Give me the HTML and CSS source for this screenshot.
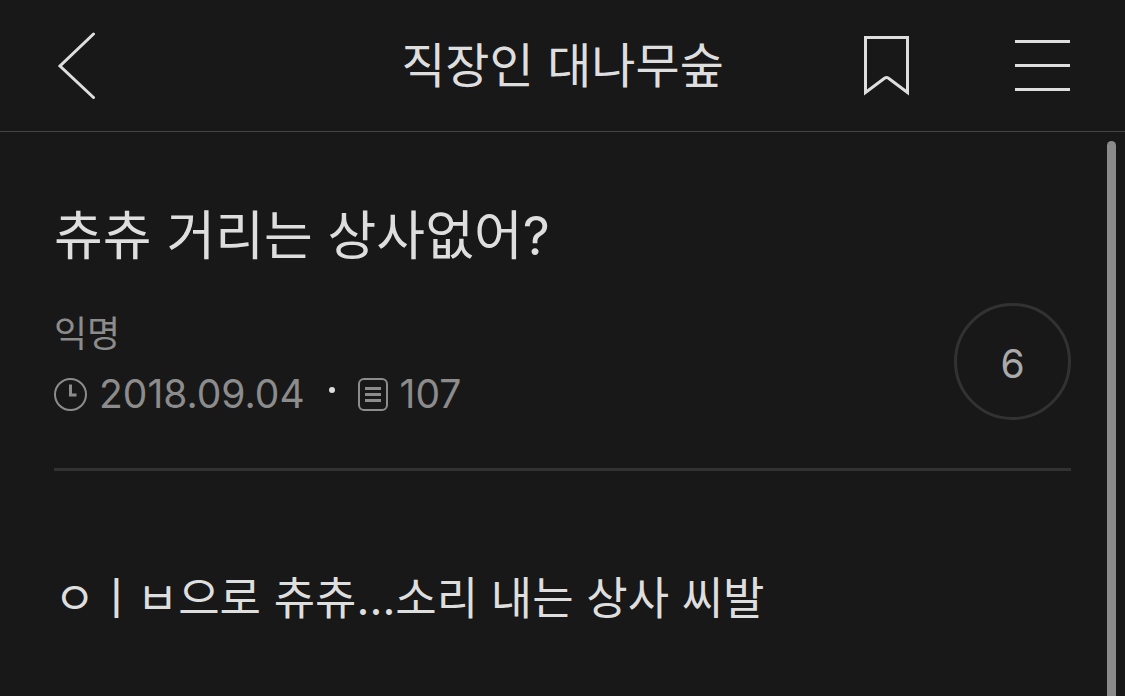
FILE: index.html
```
<!DOCTYPE html>
<html lang="ko">
<head>
    <meta charset="UTF-8">
    <meta name="viewport" content="width=device-width, initial-scale=1.0">
    <title>직장인 대나무숲</title>
    <link rel="stylesheet" href="styles.css">
</head>
<body>
    <header class="topbar">
        <div class="topbar-left">
            <button class="icon-btn" type="button" aria-label="뒤로">
                <svg width="40" height="68" viewBox="0 0 40 68" fill="none" stroke="currentColor" stroke-width="3" stroke-linecap="round">
                    <path d="M38.500 2 L5 34 L38.500 65.500"/>
                </svg>
            </button>
        </div>
        <h1>직장인 대나무숲</h1>
        <div class="topbar-right">
            <button class="icon-btn" type="button" aria-label="북마크">
                <svg width="46" height="62" viewBox="0 0 46 62" fill="none" stroke="currentColor" stroke-width="3">
                    <path d="M1.500 2.500 H43.500 V57.500 L24.200 43 Q22.500 42 20.800 43 L1.500 57.500 Z"/>
                </svg>
            </button>
            <button class="icon-btn" type="button" aria-label="메뉴">
                <svg width="55" height="52" viewBox="0 0 55 52" fill="none" stroke="currentColor" stroke-width="3">
                    <path d="M0 1.500 H55 M0 25.500 H55 M0 49.500 H55"/>
                </svg>
            </button>
        </div>
    </header>
    <main class="post">
        <div class="post-head">
            <h2>츄츄 거리는 상사없어?</h2>
            <div class="post-info">
                <div class="post-meta">
                    <p class="author">익명</p>
                    <p class="stats">
                        <svg width="33" height="33" viewBox="0 0 33 33" fill="none" stroke="currentColor">
                            <circle cx="16.500" cy="16.500" r="15.500" stroke-width="2"/>
                            <path d="M16.500 6.500 V17 H22.500" stroke-width="3"/>
                        </svg>
                        <span class="date">2018.09.04</span>
                        <span class="dot"></span>
                        <svg width="30" height="33" viewBox="0 0 30 33" fill="none" stroke="currentColor">
                            <rect x="1" y="1" width="28" height="31" rx="5" stroke-width="2"/>
                            <path d="M7 10.500 H23 M7 16.500 H23 M7 22.500 H23" stroke-width="3"/>
                        </svg>
                        <span class="views">107</span>
                    </p>
                </div>
                <a class="comments" href="#comments">6</a>
            </div>
        </div>
        <p class="post-body">ㅇㅣㅂ으로 츄츄...소리 내는 상사 씨발</p>
    </main>
    <div class="scrollbar"></div>
</body>
</html>
```
FILE: styles.css
```
* {
    box-sizing: border-box;
}
body {
    font-family: Inter, "Noto Sans CJK KR", sans-serif;
    margin: 0;
    background-color: #181818;
    color: #dedede;
    min-height: 100vh;
    overflow: hidden;
}
h1, h2, p {
    margin: 0;
    font-weight: 400;
}
svg {
    display: block;
    flex-shrink: 0;
}
.topbar {
    display: grid;
    grid-template-columns: 1fr auto 1fr;
    align-items: center;
    height: 132px;
    padding: 0 55px;
    border-bottom: 1px solid #444;
}
.topbar h1 {
    font-size: 48px;
    line-height: 64px;
}
.topbar-left {
    display: flex;
}
.topbar-right {
    display: flex;
    align-items: center;
    justify-content: flex-end;
    gap: 105px;
}
.icon-btn {
    padding: 0;
    border: 0;
    background: none;
    color: inherit;
    cursor: pointer;
}
.post {
    padding: 66px 54px;
}
.post-head {
    padding-bottom: 45px;
    border-bottom: 3px solid #323232;
}
.post-head h2 {
    font-size: 53px;
    line-height: 76px;
}
.post-info {
    display: flex;
    align-items: flex-start;
    justify-content: space-between;
    margin-top: 29px;
}
.post-meta {
    color: #8c8c8c;
}
.author {
    font-size: 36px;
    line-height: 62px;
}
.stats {
    display: flex;
    align-items: center;
    font-size: 39px;
    line-height: 58px;
}
.date {
    margin-left: 12px;
}
.dot {
    width: 6px;
    height: 6px;
    margin: 0 23px 8px 24px;
    border-radius: 50%;
    background-color: #dedede;
}
.views {
    margin-left: 12px;
}
.comments {
    width: 117px;
    height: 117px;
    padding-top: 2px;
    border: 3px solid #323232;
    border-radius: 50%;
    color: #aaa;
    font-size: 39px;
    line-height: 111px;
    text-align: center;
    text-decoration: none;
}
.post-body {
    margin-top: 96px;
    font-size: 45px;
    line-height: 64px;
}
/* thumb floats over the page and runs off the bottom edge */
.scrollbar {
    position: absolute;
    top: 141px;
    right: 9px;
    bottom: 0;
    width: 9px;
    border-radius: 5px 5px 0 0;
    background-color: #8b8b8b;
}
```
